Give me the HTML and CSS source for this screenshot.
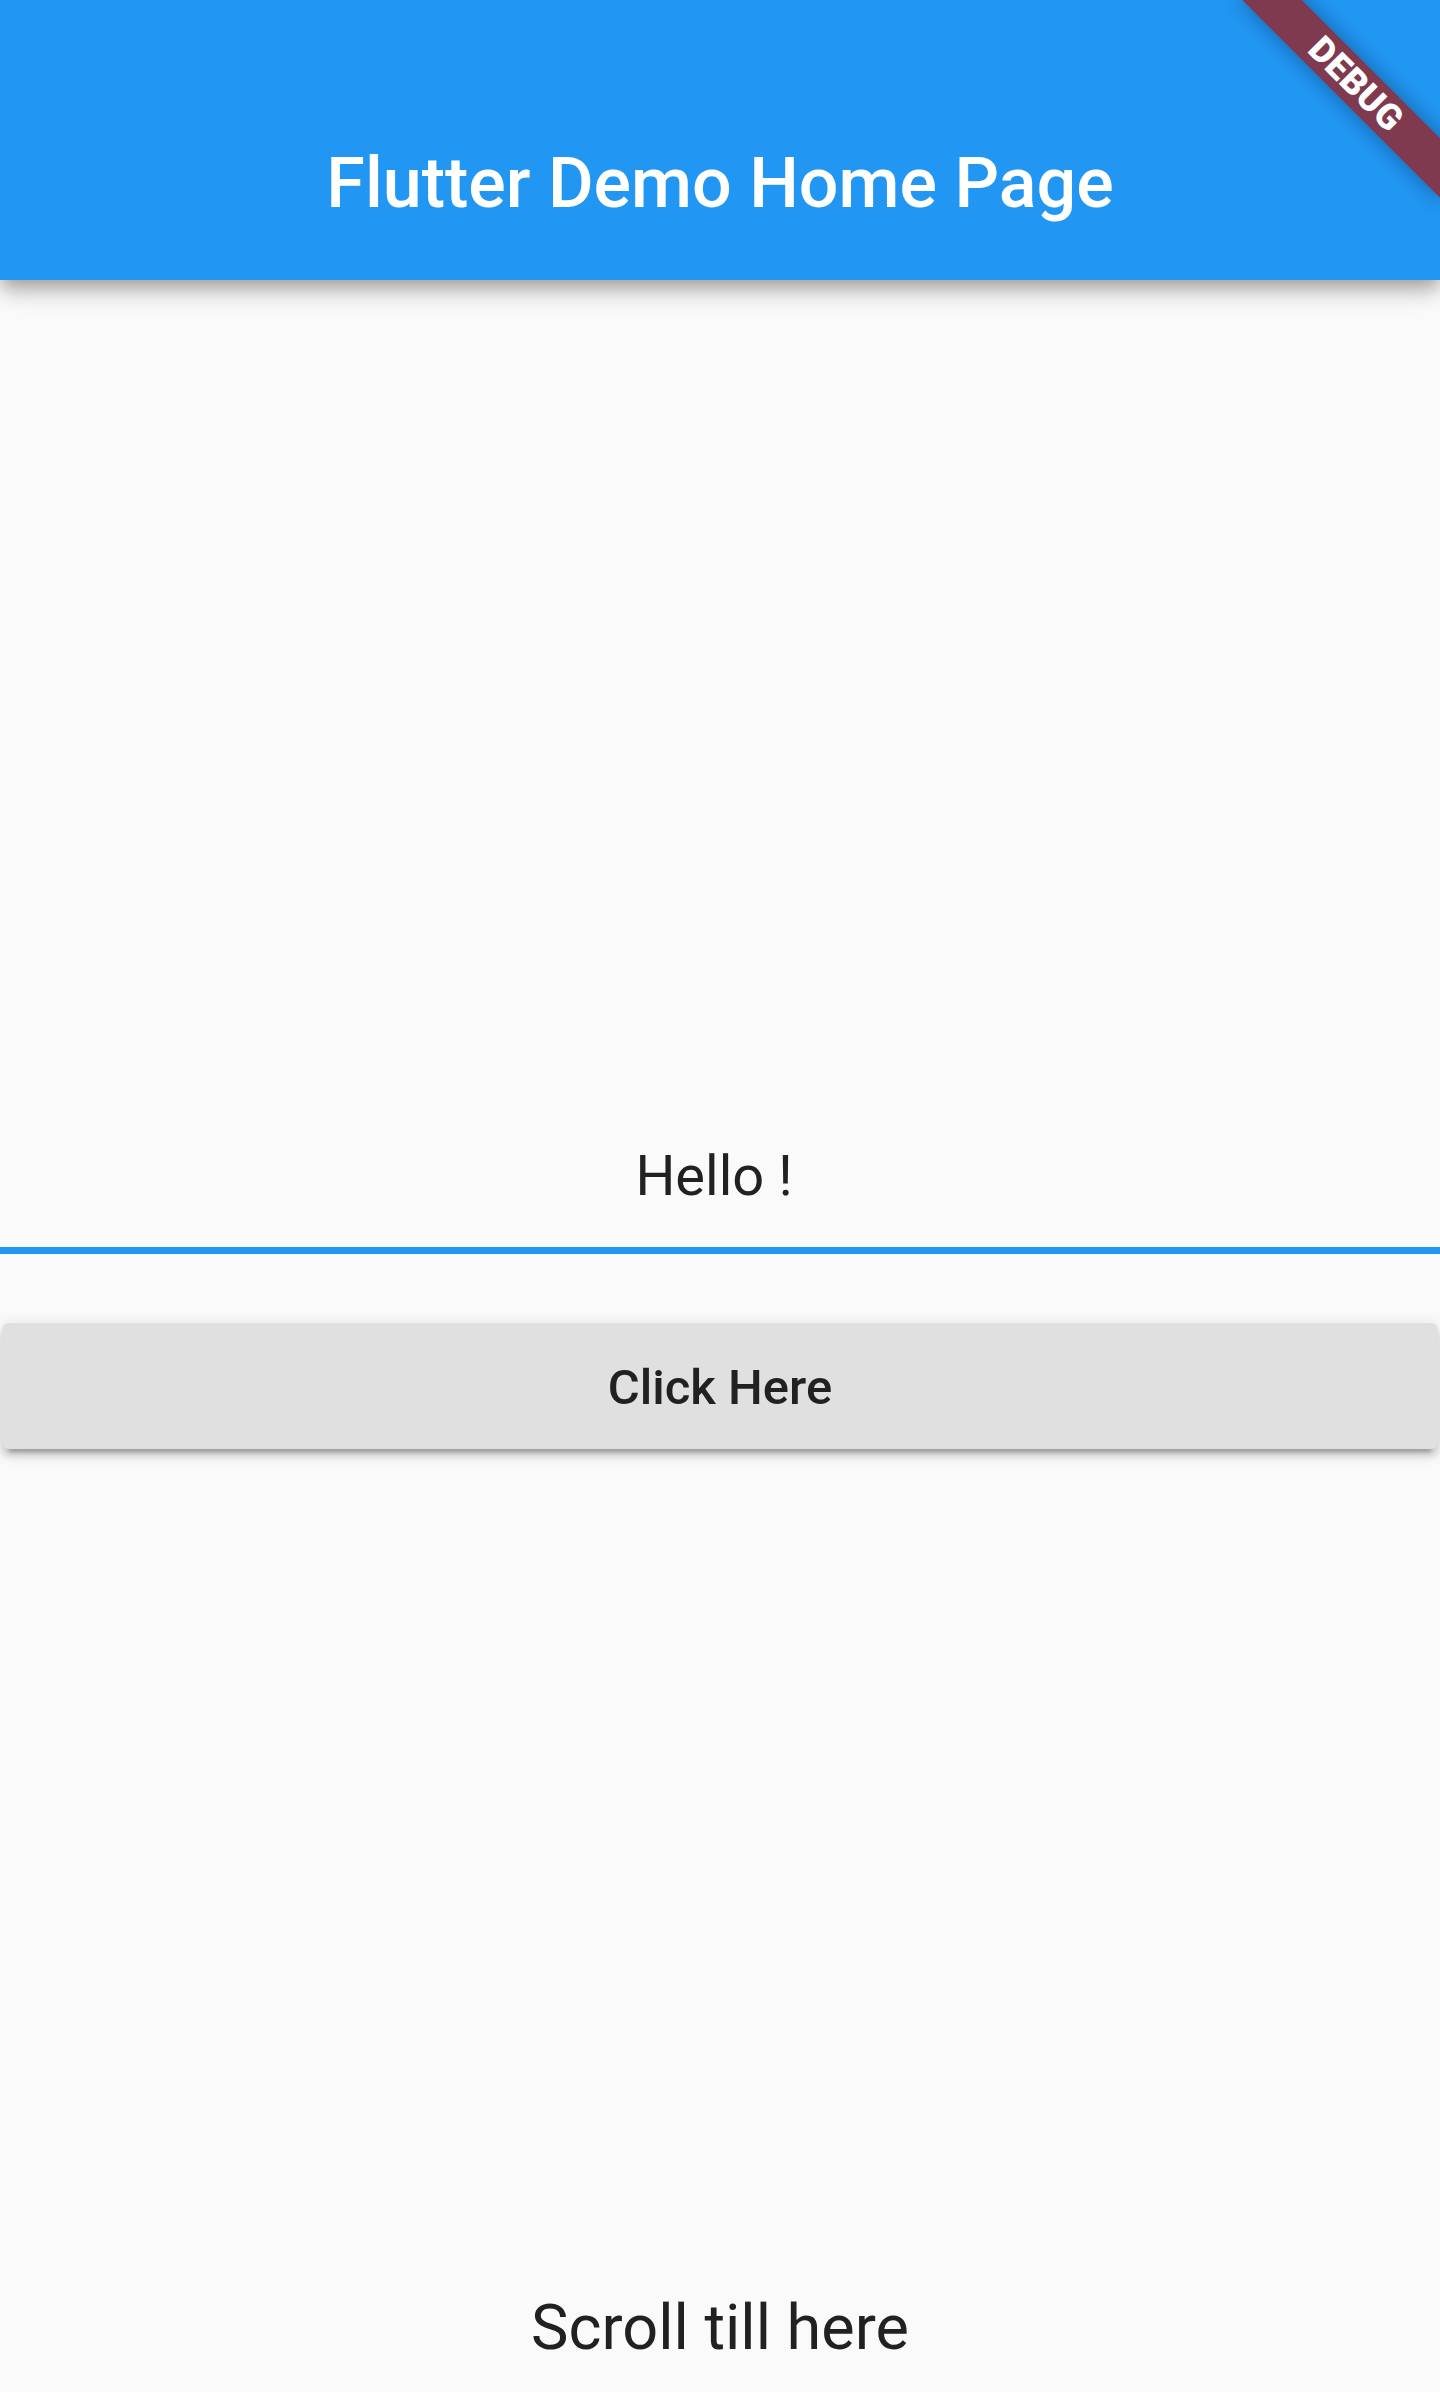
FILE: index.html
```html
<!DOCTYPE html>
<html>
<head>
<meta charset="utf-8">
<title>Flutter Demo Home Page</title>
<link rel="stylesheet" href="styles.css">
</head>
<body>
<div class="screen">
  <header class="appbar">
    <div class="toolbar">
      <h1 class="title">Flutter Demo Home Page</h1>
    </div>
    <div class="banner">DEBUG</div>
  </header>
  <main class="content">
    <div class="field">Hello !</div>
    <button class="raised">Click Here</button>
    <p class="footer-text">Scroll till here</p>
  </main>
</div>
</body>
</html>
```
FILE: styles.css
```css
html, body {
  margin: 0;
  padding: 0;
  background: #fafafa;
}
body {
  font-family: Roboto, "Noto Sans", "Liberation Sans", sans-serif;
  color: rgba(0, 0, 0, 0.87);
  overflow: hidden;
}
.screen {
  width: 1440px;
  height: 2392px;
  display: flex;
  flex-direction: column;
  overflow: hidden;
}
.appbar {
  position: relative;
  height: 280px;
  flex: none;
  padding-top: 84px;
  box-sizing: border-box;
  background: #2196f3;
  overflow: hidden;
  z-index: 2;
  box-shadow: 0 7px 14px -3.5px rgba(0, 0, 0, 0.2),
              0 14px 17.5px 0 rgba(0, 0, 0, 0.14),
              0 3.5px 35px 0 rgba(0, 0, 0, 0.12);
}
.toolbar {
  height: 196px;
  display: flex;
  align-items: center;
  justify-content: center;
  padding-top: 2px;
  box-sizing: border-box;
}
.title {
  margin: 0;
  font-size: 70px;
  font-weight: 500;
  line-height: 82px;
  color: #ffffff;
  letter-spacing: 0;
}
.banner {
  position: absolute;
  left: 1216px;
  top: 63px;
  width: 280px;
  height: 42px;
  transform: rotate(45deg);
  background: #7f3a50;
  box-shadow: 0 0 21px rgba(0, 0, 0, 0.35);
  color: #ffffff;
  font-size: 35.7px;
  font-weight: 900;
  line-height: 42px;
  text-align: center;
  letter-spacing: 0.5px;
}
.content {
  display: flex;
  flex-direction: column;
  align-items: stretch;
}
.field {
  margin-top: 863px;
  height: 66px;
  line-height: 66px;
  font-size: 56px;
  text-align: center;
  padding-right: 12px;
  padding-bottom: 38px;
  border-bottom: 7px solid #2196f3;
  color: #212121;
}
.raised {
  margin: 69px 2px 0;
  height: 126px;
  padding: 2px 0 0;
  border: none;
  border-radius: 7px;
  background: #e0e0e0;
  font-family: Roboto, "Noto Sans", "Liberation Sans", sans-serif;
  font-size: 49px;
  font-weight: 500;
  color: #212121;
  letter-spacing: 0;
  box-shadow: 0 10.5px 3.5px -7px rgba(0, 0, 0, 0.2),
              0 7px 7px 0 rgba(0, 0, 0, 0.14),
              0 3.5px 17.5px 0 rgba(0, 0, 0, 0.12);
}
.footer-text {
  margin: 841px 0 0;
  font-size: 63px;
  line-height: 75px;
  text-align: center;
  color: #212121;
}
```
